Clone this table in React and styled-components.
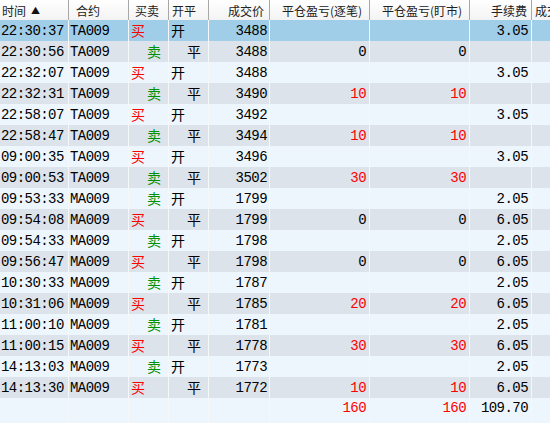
import React from "react";
import styled, { createGlobalStyle } from "styled-components";

const Global = createGlobalStyle`
  html, body { margin: 0; padding: 0; background: #eef6fd; }
  body { overflow: hidden; }
`;

const COLS = "69px 60px 40px 40px 61px 100px 100px 62px 80px";

const Table = styled.div`
  width: 550px;
  height: 423px;
  overflow: hidden;
  background: #eef6fd;
  font-family: "Liberation Mono", "Noto Sans CJK SC", monospace;
`;

const Inner = styled.div`
  width: 612px;
`;

const HeaderRow = styled.div`
  display: grid;
  grid-template-columns: ${COLS};
  height: 20px;
  background: linear-gradient(#ffffff, #f3f3f3);
`;

const HeadCell = styled.div`
  display: flex;
  align-items: center;
  justify-content: ${(p) => (p.$right ? "flex-end" : "flex-start")};
  padding: ${(p) => (p.$right ? `0 ${p.$pad}px 0 0` : `0 0 0 ${p.$pad}px`)};
  border-right: 1px solid #a8a8a8;
  font-family: "Noto Sans CJK SC", "Noto Sans", sans-serif;
  font-size: 12px;
  color: #222;
  white-space: nowrap;
  overflow: hidden;
  gap: 5px;
`;

const Arrow = styled.span`
  font-size: 9px;
  color: #111;
`;

const Row = styled.div`
  display: grid;
  grid-template-columns: ${COLS};
  height: 21px;
  background: ${(p) => (p.$selected ? "#a0cde8" : p.$alt ? "#dce3ea" : "#eef6fd")};
`;

const Cell = styled.div`
  display: flex;
  align-items: center;
  justify-content: ${(p) => (p.$right ? "flex-end" : "flex-start")};
  padding: ${(p) => (p.$right ? `0 ${p.$pad ?? 2}px 1px 0` : `0 0 1px ${p.$pad ?? 1}px`)};
  border-right: 1px solid #f4f8fb;
  font-size: 14px;
  letter-spacing: -0.55px;
  color: ${(p) => (p.$red ? "#ff0000" : "#000")};
  white-space: nowrap;
  overflow: hidden;
`;

const Side = styled.div`
  display: flex;
  align-items: center;
  padding: 0 0 3px ${(p) => (p.$indent ? 18 : 2)}px;
  border-right: 1px solid #f4f8fb;
  font-family: "Noto Sans CJK SC", sans-serif;
  font-size: 14px;
  color: ${(p) => p.$color || "#000"};
`;

const headers = [
  { t: "时间", pad: 2, arrow: true },
  { t: "合约", pad: 7 },
  { t: "买卖", pad: 6 },
  { t: "开平", pad: 3 },
  { t: "成交价", right: true, pad: 5 },
  { t: "平仓盈亏(逐笔)", right: true, pad: 7 },
  { t: "平仓盈亏(盯市)", right: true, pad: 7 },
  { t: "手续费", right: true, pad: 4 },
  { t: "成交数量", pad: 3 },
];

const data = [
  ["22:30:37", "TA009", "买", "开", "3488", "", "", "3.05"],
  ["22:30:56", "TA009", "卖", "平", "3488", "0", "0", ""],
  ["22:32:07", "TA009", "买", "开", "3488", "", "", "3.05"],
  ["22:32:31", "TA009", "卖", "平", "3490", "10", "10", ""],
  ["22:58:07", "TA009", "买", "开", "3492", "", "", "3.05"],
  ["22:58:47", "TA009", "卖", "平", "3494", "10", "10", ""],
  ["09:00:35", "TA009", "买", "开", "3496", "", "", "3.05"],
  ["09:00:53", "TA009", "卖", "平", "3502", "30", "30", ""],
  ["09:53:33", "MA009", "卖", "开", "1799", "", "", "2.05"],
  ["09:54:08", "MA009", "买", "平", "1799", "0", "0", "6.05"],
  ["09:54:33", "MA009", "卖", "开", "1798", "", "", "2.05"],
  ["09:56:47", "MA009", "买", "平", "1798", "0", "0", "6.05"],
  ["10:30:33", "MA009", "卖", "开", "1787", "", "", "2.05"],
  ["10:31:06", "MA009", "买", "平", "1785", "20", "20", "6.05"],
  ["11:00:10", "MA009", "卖", "开", "1781", "", "", "2.05"],
  ["11:00:15", "MA009", "买", "平", "1778", "30", "30", "6.05"],
  ["14:13:03", "MA009", "卖", "开", "1773", "", "", "2.05"],
  ["14:13:30", "MA009", "买", "平", "1772", "10", "10", "6.05"],
];

const isRed = (v) => v !== "" && v !== "0";

export default function App() {
  return (
    <>
      <Global />
      <Table>
        <Inner>
          <HeaderRow>
            {headers.map((h) => (
              <HeadCell key={h.t} $right={h.right} $pad={h.pad}>
                {h.t}
                {h.arrow && <Arrow>▲</Arrow>}
              </HeadCell>
            ))}
          </HeaderRow>
          {data.map((r, i) => (
            <Row key={i} $selected={i === 0} $alt={i % 2 === 1}>
              <Cell>{r[0]}</Cell>
              <Cell>{r[1]}</Cell>
              <Side $indent={r[2] === "卖"} $color={r[2] === "买" ? "#ff0000" : "#009000"}>
                {r[2]}
              </Side>
              <Side $indent={r[3] === "平"}>{r[3]}</Side>
              <Cell $right>{r[4]}</Cell>
              <Cell $right $pad={3} $red={isRed(r[5])}>{r[5]}</Cell>
              <Cell $right $pad={3} $red={isRed(r[6])}>{r[6]}</Cell>
              <Cell $right $pad={3}>{r[7]}</Cell>
              <Cell />
            </Row>
          ))}
          <Row>
            <Cell />
            <Cell />
            <Side />
            <Side />
            <Cell />
            <Cell $right $pad={3} $red>160</Cell>
            <Cell $right $pad={3} $red>160</Cell>
            <Cell $right $pad={3}>109.70</Cell>
            <Cell />
          </Row>
          <Row>
            <Cell />
            <Cell />
            <Side />
            <Side />
            <Cell />
            <Cell />
            <Cell />
            <Cell />
            <Cell />
          </Row>
        </Inner>
      </Table>
    </>
  );
}
